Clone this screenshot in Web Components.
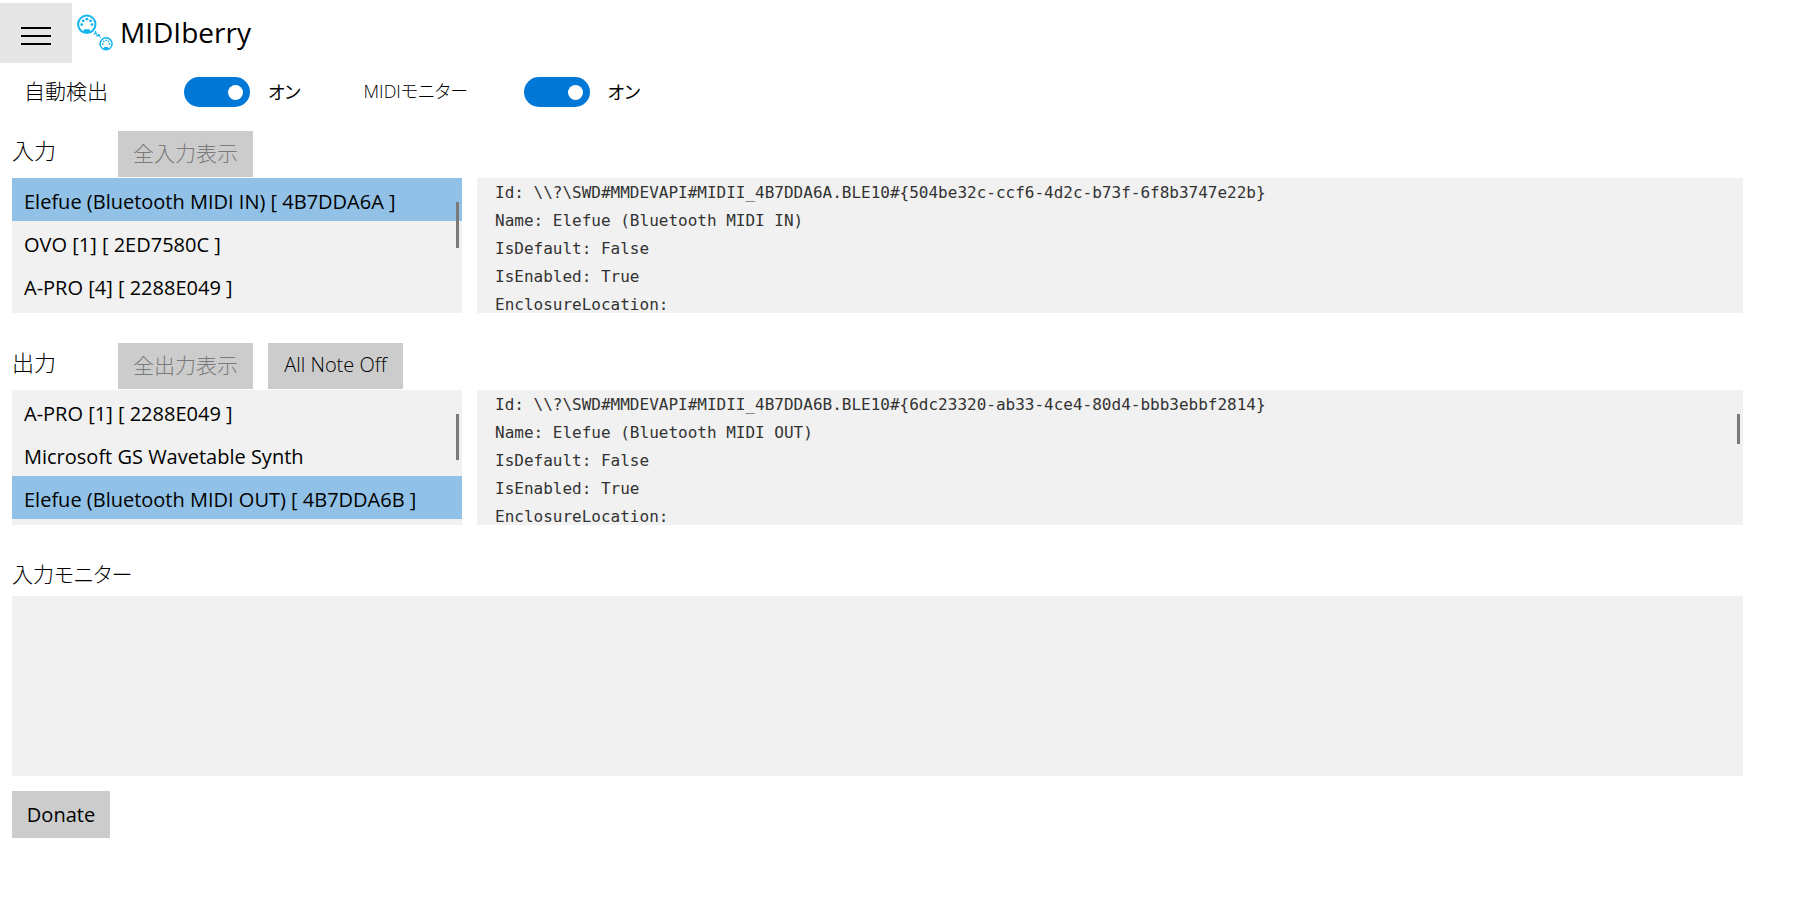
<!DOCTYPE html>
<html lang="ja">
<head>
<meta charset="utf-8">
<title>MIDIberry</title>
<style>
  body {
    margin: 0;
    background: #fff;
    color: #000;
    font-family: "Open Sans", "Noto Sans CJK JP", sans-serif;
    font-size: 20px;
    font-feature-settings: "palt";
  }
</style>
</head>
<body>
<midi-app></midi-app>
<script>
const define = (name, html, setup) => {
  const template = document.createElement('template');
  template.innerHTML = html;
  customElements.define(name, class extends HTMLElement {
    connectedCallback() {
      if (this.shadowRoot) return;
      this.attachShadow({ mode: 'open' }).append(template.content.cloneNode(true));
      if (setup) setup(this, this.shadowRoot);
    }
  });
};

define('app-logo', `
<style>
  :host { display: block; width: 36px; height: 38px; }
  svg { display: block; }
</style>
<svg width="36" height="38" viewBox="0 0 36 38" aria-hidden="true">
  <circle cx="9.8" cy="10.3" r="8.7" fill="none" stroke="#14b4ee" stroke-width="2"/>
  <path d="M5.8 18.6 L7 15.2 H12.6 L13.8 18.6 Z" fill="#14b4ee"/>
  <g fill="#14b4ee">
    <circle cx="4.8" cy="10.6" r="1.4"/><circle cx="6.2" cy="6.8" r="1.4"/>
    <circle cx="9.9" cy="5.2" r="1.4"/><circle cx="13.6" cy="6.8" r="1.4"/><circle cx="15" cy="10.6" r="1.4"/>
  </g>
  <path d="M17.2 20.8 L18.6 17.8 L20.4 22.6 L22 20 L23.4 24 " fill="none" stroke="#14b4ee" stroke-width="1.2" stroke-dasharray="2.4 .6"/>
  <circle cx="29.1" cy="29.7" r="6" fill="none" stroke="#14b4ee" stroke-width="1.5"/>
  <path d="M26.2 35.4 L27.2 32.9 H31 L32 35.4 Z" fill="#14b4ee"/>
  <g fill="#14b4ee">
    <circle cx="25.7" cy="29.9" r=".9"/><circle cx="26.7" cy="27.3" r=".9"/>
    <circle cx="29.1" cy="26.3" r=".9"/><circle cx="31.5" cy="27.3" r=".9"/><circle cx="32.5" cy="29.9" r=".9"/>
  </g>
</svg>`);

define('app-header', `
<style>
  :host { display: flex; align-items: center; height: 60px; padding-top: 3px; }
  button { box-sizing: border-box; width: 72px; height: 60px; margin: 0 5px 0 0; padding: 6px 21px 0; border: 0; background: #e6e6e6;
    display: flex; flex-direction: column; justify-content: center; gap: 6px; }
  span { display: block; height: 2px; width: 30px; background: #000; }
  h1 { margin: 0 0 0 7px; font-size: 28px; line-height: 58px; height: 60px; font-weight: 400; }
</style>
<button type="button" aria-label="メニュー"><span></span><span></span><span></span></button>
<app-logo></app-logo>
<h1><slot></slot></h1>`);

define('toggle-switch', `
<style>
  :host { display: flex; align-items: center; height: 30px; }
  label { width: 160px; font-size: 21px; font-weight: 300; line-height: 28px; height: 30px; }
  :host([compact]) label { font-size: 18px; }
  input { appearance: none; width: 66px; height: 30px; margin: 0 18px 0 0; padding: 0 7px; border-radius: 15px;
    background: #0078d7; display: flex; align-items: center; justify-content: flex-end; }
  input::before { content: ""; width: 15px; height: 15px; border-radius: 50%; background: #fff; }
  output { font-size: 18px; line-height: 32px; }
</style>
<label for="t"><slot></slot></label>
<input id="t" type="checkbox" role="switch" checked>
<output for="t">オン</output>`);

define('gray-button', `
<style>
  :host { display: block; }
  button { font: inherit; font-feature-settings: inherit; color: #000; background: #ccc; border: 0; border-radius: 0;
    width: 100%; height: 100%; padding: 0 0 var(--lift, 0); }
  button:disabled { color: #7a7a7a; font-size: 21px; }
</style>
<button type="button"><slot></slot></button>`, (host, root) => {
  root.querySelector('button').disabled = host.hasAttribute('disabled');
});

define('device-list', `
<style>
  :host { display: block; position: relative; width: 450px; height: 135px; overflow: hidden; background: #f1f1f1; }
  ul { list-style: none; margin: 0; padding: 0; }
  li { height: 43px; line-height: 48px; padding: 0 12px; white-space: nowrap; }
  li[aria-selected=true] { background: #91c1e6; }
  i { position: absolute; right: 3px; top: 24px; width: 3px; height: 46px; background: #7a7a7a; }
</style>
<ul role="listbox"></ul><i></i>`, (host, root) => {
  const ul = root.querySelector('ul');
  host.getAttribute('items').split('|').forEach((text, n) => {
    const li = document.createElement('li');
    li.setAttribute('role', 'option');
    li.setAttribute('aria-selected', String(n === Number(host.getAttribute('selected'))));
    li.textContent = text;
    ul.append(li);
  });
});

define('device-info', `
<style>
  :host { display: block; position: relative; flex: 1; min-width: 0; height: 135px; overflow: hidden; background: #f1f1f1; }
  pre { margin: 0; padding: 1px 18px 0; font: 16px/28px "DejaVu Sans Mono", monospace; color: #333; }
  i { display: none; position: absolute; right: 3px; top: 24px; width: 3px; height: 30px; background: #7a7a7a; }
  :host([scrollbar]) i { display: block; }
</style>
<pre><slot></slot></pre><i></i>`);

define('device-section', `
<style>
  :host { display: block; --lift: 4px; }
  header { display: flex; align-items: flex-start; height: 47px; gap: 15px; font-weight: 300; }
  h2 { width: 91px; margin: 0; font-size: 22px; font-weight: 300; line-height: 38px; }
  .body { display: flex; gap: 15px; }
</style>
<header><h2><slot name="title"></slot></h2><slot name="action"></slot></header>
<div class="body"><slot></slot></div>`);

define('input-monitor', `
<style>
  :host { display: block; }
  label { display: block; font-size: 21px; font-weight: 300; line-height: 38px; height: 41px; }
  textarea { display: block; box-sizing: border-box; width: 100%; height: 180px; margin: 0; padding: 12px; border: 0;
    border-radius: 0; background: #f1f1f1; resize: none; outline: 0; font: inherit; }
</style>
<label for="m"><slot></slot></label>
<textarea id="m" readonly></textarea>`);

define('midi-app', `
<style>
  :host { display: block; }
  .toggles { display: flex; gap: 63px; padding: 14px 24px 24px; }
  main { display: flex; flex-direction: column; padding: 0 57px 0 12px; }
  device-section { margin-bottom: 30px; }
  gray-button { width: 135px; height: 46px; }
  input-monitor { margin-bottom: 15px; }
  .donate { width: 98px; height: 47px; }
</style>
<app-header>MIDIberry</app-header>
<div class="toggles">
  <toggle-switch>自動検出</toggle-switch>
  <toggle-switch compact>MIDIモニター</toggle-switch>
</div>
<main>
  <device-section>
    <span slot="title">入力</span>
    <gray-button slot="action" disabled>全入力表示</gray-button>
    <device-list selected="0" items="Elefue (Bluetooth MIDI IN) [ 4B7DDA6A ]|OVO [1] [ 2ED7580C ]|A-PRO [4] [ 2288E049 ]"></device-list>
    <device-info>Id: \\\\?\\SWD#MMDEVAPI#MIDII_4B7DDA6A.BLE10#{504be32c-ccf6-4d2c-b73f-6f8b3747e22b}
Name: Elefue (Bluetooth MIDI IN)
IsDefault: False
IsEnabled: True
EnclosureLocation:</device-info>
  </device-section>
  <device-section>
    <span slot="title">出力</span>
    <gray-button slot="action" disabled>全出力表示</gray-button>
    <gray-button slot="action">All Note Off</gray-button>
    <device-list selected="2" items="A-PRO [1] [ 2288E049 ]|Microsoft GS Wavetable Synth|Elefue (Bluetooth MIDI OUT) [ 4B7DDA6B ]"></device-list>
    <device-info scrollbar>Id: \\\\?\\SWD#MMDEVAPI#MIDII_4B7DDA6B.BLE10#{6dc23320-ab33-4ce4-80d4-bbb3ebbf2814}
Name: Elefue (Bluetooth MIDI OUT)
IsDefault: False
IsEnabled: True
EnclosureLocation:</device-info>
  </device-section>
  <input-monitor>入力モニター</input-monitor>
  <gray-button class="donate">Donate</gray-button>
</main>`);
</script>
</body>
</html>
